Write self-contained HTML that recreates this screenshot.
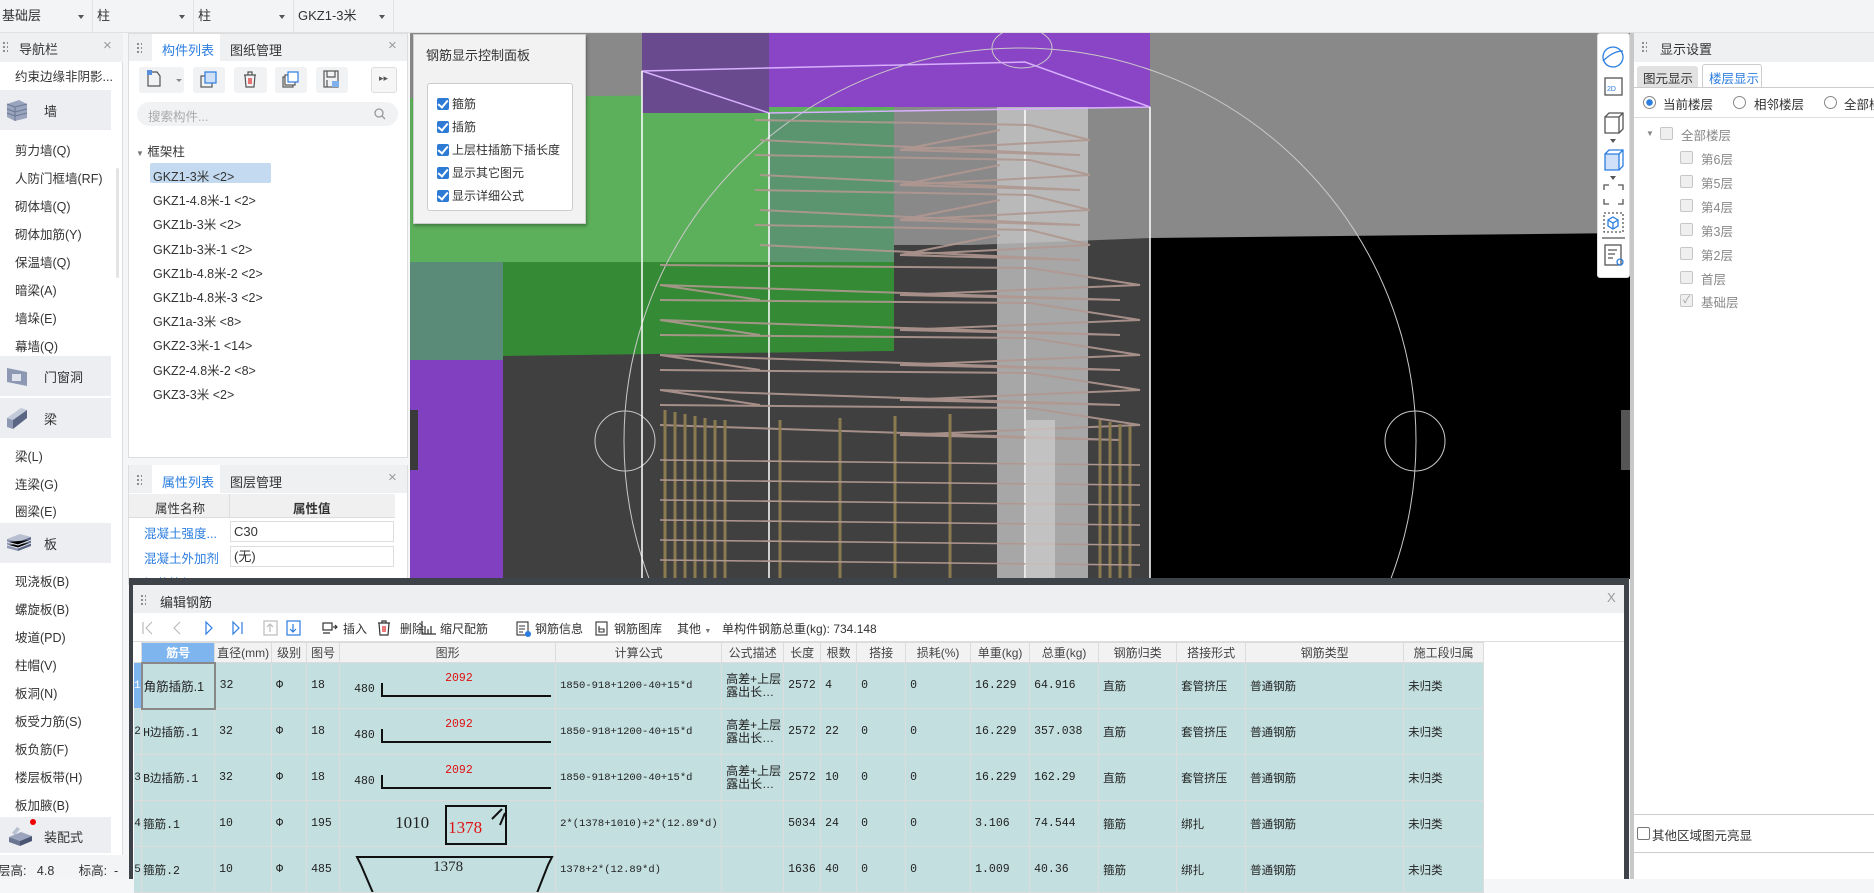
<!DOCTYPE html>
<html><head><meta charset="utf-8">
<style>
*{box-sizing:border-box;margin:0;padding:0}
body{width:1874px;height:879px;overflow:hidden;position:relative;background:#f5f6f8;font-family:"Liberation Sans","Noto Sans CJK SC",sans-serif;font-size:13px;color:#333}
.a{position:absolute}
.dd{position:absolute;top:0;height:32px;line-height:32px;padding-left:4px;border-right:1px solid #e2e2e2;background:#f3f4f6;font-size:13px}
.dd:after{content:"";position:absolute;right:8px;top:15px;border:3px solid transparent;border-top:4px solid #555}
.hdr{position:absolute;background:#eff0f2;height:27px}
.grip{position:absolute;width:6px;height:12px;background-image:radial-gradient(circle,#8a8a8a 1px,transparent 1.3px);background-size:4px 4px}
.x{position:absolute;color:#9a9a9a;font-size:15px}
.grp{position:absolute;left:0;width:111px;height:40px;background:#eceef2}
.grp span{position:absolute;left:44px;top:11px;font-size:13px}
.li{position:absolute;left:153px;font-size:12.5px;color:#333}
.tb{position:absolute;top:67px;height:26px;background:#f1f2f4;border-radius:3px}
table{border-collapse:collapse;table-layout:fixed;position:absolute;left:134px;top:642px}
td{border:1px solid #dcdcdc;height:46px;font-family:"Liberation Mono","Noto Sans CJK SC",monospace;font-size:11.5px;color:#222;background:#c3dfe0;padding-left:4px;white-space:nowrap;overflow:hidden;vertical-align:middle}
tr.h td{height:20px;background:#f2f2f2;text-align:center;padding:0;font-family:"Liberation Sans","Noto Sans CJK SC",sans-serif;font-size:12px;color:#444}
td.n{padding:0;font-size:11px;background:#c3dfe0;text-align:center;border-left:none}
.red{color:#e01010}
.cb{display:inline-block;width:12px;height:12px;background:#2e7bd6;border-radius:2px;vertical-align:-2px;margin-right:3px;position:relative}
.cb:after{content:"";position:absolute;left:3px;top:0px;width:4px;height:8px;border:solid #fff;border-width:0 2px 2px 0;transform:rotate(40deg)}
.ec{position:absolute;width:13px;height:13px;border:1px solid #c6c6c6;background:#efefef;border-radius:2px}
.fl{position:absolute;left:1701px;color:#888;font-size:12.5px}
</style></head><body>

<div class="a" style="left:0;top:0;width:1874px;height:33px;background:#f3f4f6;border-bottom:1px solid #e0e0e0"></div>
<div class="dd" style="left:-2px;width:95px">基础层</div>
<div class="dd" style="left:93px;width:101px">柱</div>
<div class="dd" style="left:194px;width:100px">柱</div>
<div class="dd" style="left:294px;width:100px">GKZ1-3米</div>

<div class="a" style="left:0;top:33px;width:123px;height:822px;background:#fff;border-right:1px solid #ddd"></div>
<div class="hdr" style="left:0;top:33px;width:123px;height:29px"></div>
<div class="grip" style="left:2px;top:41px"></div>
<div class="a" style="left:19px;top:39px;font-size:13px">导航栏</div>
<div class="x" style="left:103px;top:37px">×</div>
<div class="a" style="left:15px;top:66px;font-size:12.5px">约束边缘非阴影...</div>
<div class="a" style="left:116px;top:168px;width:3px;height:110px;background:#e4e4e4;border-radius:2px"></div>
<div class="grp" style="top:90px"><svg class="a" style="left:5px;top:8px" width="24" height="24"><path d="M2 6 L14 2 L22 6 L22 20 L10 23 L2 19Z" fill="#9aa5bd"/><path d="M2 6 L10 9 L22 6 M10 9 L10 23 M2 11 L10 14 L22 11 M2 15 L10 18 L22 15" stroke="#6b7792" fill="none"/></svg><span>墙</span></div>
<div class="a" style="left:15px;top:137px;font-size:12.5px;line-height:28px">剪力墙(Q)<br>人防门框墙(RF)<br>砌体墙(Q)<br>砌体加筋(Y)<br>保温墙(Q)<br>暗梁(A)<br>墙垛(E)<br>幕墙(Q)</div>
<div class="grp" style="top:356px"><svg class="a" style="left:5px;top:8px" width="24" height="24"><path d="M2 4 L22 8 L22 22 L2 18Z" fill="#8d98b3"/><rect x="7" y="10" width="9" height="7" fill="#dfe3ec"/></svg><span>门窗洞</span></div>
<div class="grp" style="top:398px"><svg class="a" style="left:5px;top:8px" width="24" height="24"><path d="M2 12 L16 2 L22 4 L8 14Z" fill="#c2c9d8"/><path d="M2 12 L8 14 L8 23 L2 21Z" fill="#8d98b3"/><path d="M8 14 L22 4 L22 12 L8 23Z" fill="#5a6684"/></svg><span>梁</span></div>
<div class="a" style="left:15px;top:444px;font-size:12.5px;line-height:27.5px">梁(L)<br>连梁(G)<br>圈梁(E)</div>
<div class="grp" style="top:523px"><svg class="a" style="left:6px;top:8px" width="26" height="24"><path d="M1 8 L14 3 L25 6 L12 11Z" fill="#b7bfd0"/><path d="M1 8 L12 11 L12 20 L1 17Z" fill="#8d98b3"/><path d="M12 11 L25 6 L25 15 L12 20Z" fill="#5a6684"/><path d="M1 11 L12 14 L25 9 M1 14 L12 17 L25 12" stroke="#dfe3ec"/></svg><span>板</span></div>
<div class="a" style="left:15px;top:568px;font-size:12.5px;line-height:28px">现浇板(B)<br>螺旋板(B)<br>坡道(PD)<br>柱帽(V)<br>板洞(N)<br>板受力筋(S)<br>板负筋(F)<br>楼层板带(H)<br>板加腋(B)</div>
<div class="grp" style="top:817px;height:36px"><svg class="a" style="left:7px;top:6px" width="26" height="26"><path d="M2 14 L14 9 L25 13 L13 18Z" fill="#9aa5bd"/><path d="M2 14 L13 18 L13 23 L2 19Z" fill="#6b7792"/><path d="M13 18 L25 13 L25 18 L13 23Z" fill="#4a5573"/><path d="M5 10 L10 4 L13 6 L8 12Z" fill="#b7bfd0"/></svg><div class="a" style="left:30px;top:2px;width:6px;height:6px;border-radius:50%;background:#e00"></div><span style="top:10px">装配式</span></div>
<div class="a" style="left:0;top:855px;width:128px;height:24px;background:#f3f4f6"></div>
<div class="a" style="left:-2px;top:860px;font-size:12.5px">层高:&nbsp;&nbsp;&nbsp;4.8&nbsp;&nbsp;&nbsp;&nbsp;&nbsp;&nbsp;&nbsp;标高:&nbsp;&nbsp;-</div>

<div class="a" style="left:128px;top:33px;width:280px;height:425px;background:#fff;border:1px solid #ddd"></div>
<div class="hdr" style="left:129px;top:34px;width:278px;height:27px"></div>
<div class="a" style="left:152px;top:34px;width:68px;height:27px;background:#fff"></div>
<div class="grip" style="left:136px;top:42px"></div>
<div class="a" style="left:162px;top:40px;color:#2b7de0;font-size:13px">构件列表</div>
<div class="a" style="left:230px;top:40px;font-size:13px">图纸管理</div>
<div class="x" style="left:388px;top:37px">×</div>
<div class="tb" style="left:139px;width:45px"></div>
<svg class="a" style="left:147px;top:70px" width="14" height="18"><path d="M1 4 L1 16 L13 16 L13 6 L10 2 L5 2" stroke="#555" fill="none" stroke-width="1.2"/><rect x="0" y="0" width="5" height="5" fill="#5a8fe0"/></svg>
<div class="a" style="left:176px;top:79px;border:3px solid transparent;border-top:3px solid #888"></div>
<div class="tb" style="left:193px;width:32px"></div>
<svg class="a" style="left:200px;top:71px" width="18" height="18"><rect x="1" y="5" width="11" height="11" fill="none" stroke="#555" stroke-width="1.2"/><rect x="5" y="1" width="11" height="11" fill="#cfe0f8" stroke="#2b7de0" stroke-width="1.2"/></svg>
<div class="tb" style="left:234px;width:33px"></div>
<svg class="a" style="left:242px;top:70px" width="16" height="19"><path d="M2 5 L14 5 M6 5 L6 2 L10 2 L10 5 M3 5 L4 17 L12 17 L13 5" stroke="#555" fill="none" stroke-width="1.2"/><path d="M7 8 L7 14 M9 8 L9 14" stroke="#e02020" stroke-width="1.2"/></svg>
<div class="tb" style="left:275px;width:32px"></div>
<svg class="a" style="left:282px;top:71px" width="18" height="18"><rect x="1" y="6" width="10" height="10" fill="none" stroke="#555" stroke-width="1.2"/><rect x="3" y="4" width="10" height="10" fill="#fff" stroke="#555" stroke-width="1.2"/><rect x="6" y="1" width="10" height="10" fill="#fff" stroke="#2b7de0" stroke-width="1.2"/></svg>
<div class="tb" style="left:316px;width:32px"></div>
<svg class="a" style="left:323px;top:70px" width="18" height="19"><rect x="1" y="1" width="14" height="16" fill="none" stroke="#555" stroke-width="1.2"/><path d="M4 1 L4 7 L12 7 L12 1 M4 17 L4 10" stroke="#555" fill="none" stroke-width="1.2"/><rect x="9" y="11" width="7" height="6" fill="#7fb0ec"/></svg>
<div class="tb" style="left:371px;width:26px;background:#f6f6f6;border:1px solid #ddd"></div>
<div class="a" style="left:379px;top:73px;font-size:9px;color:#555">▸▸</div>
<div class="a" style="left:137px;top:102px;width:261px;height:24px;background:#f1f2f4;border-radius:12px"></div>
<div class="a" style="left:148px;top:106px;color:#aaa;font-size:12.5px">搜索构件...</div>
<svg class="a" style="left:374px;top:108px" width="12" height="12"><circle cx="5" cy="5" r="4" stroke="#999" fill="none" stroke-width="1.3"/><path d="M8 8 L11 11" stroke="#999" stroke-width="1.3"/></svg>
<div class="a" style="left:136px;top:141px;font-size:12.5px"><span style="font-size:8px;color:#777">▼</span> 框架柱</div>
<div class="a" style="left:150px;top:163px;width:121px;height:20px;background:#c4daf0;border-radius:2px"></div>
<div class="li" style="top:165px;line-height:24.2px">GKZ1-3米 &lt;2&gt;<br>GKZ1-4.8米-1 &lt;2&gt;<br>GKZ1b-3米 &lt;2&gt;<br>GKZ1b-3米-1 &lt;2&gt;<br>GKZ1b-4.8米-2 &lt;2&gt;<br>GKZ1b-4.8米-3 &lt;2&gt;<br>GKZ1a-3米 &lt;8&gt;<br>GKZ2-3米-1 &lt;14&gt;<br>GKZ2-4.8米-2 &lt;8&gt;<br>GKZ3-3米 &lt;2&gt;</div>

<div class="a" style="left:128px;top:465px;width:280px;height:120px;background:#fff;border:1px solid #ddd"></div>
<div class="hdr" style="left:129px;top:465px;width:278px;height:28px"></div>
<div class="a" style="left:152px;top:465px;width:68px;height:28px;background:#fff"></div>
<div class="grip" style="left:136px;top:474px"></div>
<div class="a" style="left:162px;top:472px;color:#2b7de0">属性列表</div>
<div class="a" style="left:230px;top:472px">图层管理</div>
<div class="x" style="left:388px;top:469px">×</div>
<div class="a" style="left:129px;top:494px;width:266px;height:24px;background:#f0f0f0;border-bottom:1px solid #ddd"></div>
<div class="a" style="left:229px;top:494px;width:1px;height:24px;background:#ddd"></div>
<div class="a" style="left:155px;top:498px;font-size:12.5px">属性名称</div>
<div class="a" style="left:293px;top:498px;font-size:12.5px;font-weight:bold">属性值</div>
<div class="a" style="left:144px;top:522px;color:#2b7de0;font-size:12.5px;line-height:25px">混凝土强度...<br>混凝土外加剂<br>坍落等级</div>
<div class="a" style="left:230px;top:521px;width:164px;height:21px;border:1px solid #ddd;background:#fff;padding-left:3px;line-height:19px">C30</div>
<div class="a" style="left:230px;top:546px;width:164px;height:21px;border:1px solid #ddd;background:#fff;padding-left:3px;line-height:19px">(无)</div>

<svg class="a" style="left:410px;top:33px" width="1220" height="546" viewBox="410 33 1220 546">
<rect x="410" y="33" width="1220" height="546" fill="#404040"/>
<rect x="410" y="33" width="1220" height="212" fill="#898989"/>
<path d="M1150 238 L1630 233 L1630 579 L1150 579Z" fill="#000"/>
<path d="M894 248 L1150 238 L1150 579 L894 579Z" fill="#404040"/>
<path d="M410 98 L894 93 L894 262 L410 266Z" fill="#5caf5b"/>
<rect x="410" y="262" width="93" height="98" fill="#5a8a78"/>
<path d="M503 262 L894 262 L894 351 L503 356Z" fill="#358a35"/>
<rect x="410" y="360" width="93" height="219" fill="#8040c0"/>
<rect x="642" y="33" width="508" height="74" fill="#8a44c6"/>
<rect x="642" y="33" width="127" height="80" fill="#6a4a8e"/>
<path d="M768 113 L894 111 L894 262 L768 262Z" fill="#5a8a78" opacity=".7"/>
<rect x="997" y="107" width="91" height="472" fill="#c9c9c9" opacity=".75"/>
<g stroke="#c9c9c9" fill="none" stroke-width="1">
<ellipse cx="1020" cy="441" rx="396" ry="393"/>
<ellipse cx="625" cy="441" rx="30" ry="30"/>
<ellipse cx="1415" cy="441" rx="30" ry="30"/>
<ellipse cx="1022" cy="48" rx="30" ry="20"/>
</g>
<g stroke="#fff" fill="none" stroke-width="1.5">
<path d="M642 71 L1025 62 L1150 107 L769 113 Z" stroke="#d8b0ff"/>
<path d="M642 71 L642 579 M769 113 L769 579 M1150 107 L1150 579 M1025 110 L1025 579"/>
</g>
<g stroke="#b09890" fill="none" stroke-width="2" opacity=".9">
<path d="M755 120 L1030 125 L1090 140 L900 150 L1080 155 L760 140 M900 150 L1000 130"/>
<path d="M755 155 L1030 160 L1090 175 L900 185 L1080 190 L760 175 M900 185 L1000 165"/>
<path d="M755 190 L1030 195 L1090 210 L900 220 L1080 225 L760 210 M900 220 L1000 200"/>
<path d="M755 225 L1030 230 L1090 245 L900 255 L1080 260 L760 245 M900 255 L1000 235"/>
<path d="M660 265 L1030 268 L1140 285 L900 295 L1120 300 L660 285 L760 300"/>
<path d="M660 300 L1030 303 L1140 320 L900 330 L1120 335 L660 320 L760 335"/>
<path d="M660 335 L1030 338 L1140 355 L900 365 L1120 370 L660 355 L760 370"/>
<path d="M660 370 L1030 373 L1140 390 L900 400 L1120 405 L660 390 L760 405"/>
<path d="M660 405 L1030 408 L1140 425 L900 435 L1120 440 L660 425"/>
</g>
<g stroke="#8a7a50" stroke-width="3">
<path d="M665 410 L665 579 M675 412 L675 579 M685 414 L685 579 M695 416 L695 579 M705 418 L705 579 M715 420 L715 579 M725 420 L725 579 M780 420 L780 579 M840 418 L840 579 M895 416 L895 579 M950 414 L950 579 M1100 420 L1100 579 M1110 422 L1110 579 M1120 424 L1120 579 M1130 426 L1130 579"/>
</g>
<g stroke="#b09890" stroke-width="1.5" fill="none">
<path d="M660 460 L1140 465 M660 500 L1140 505 M660 540 L1140 545 M660 480 L1140 485 M660 520 L1140 525 M660 560 L1140 565"/>
</g>
<rect x="1025" y="420" width="30" height="159" fill="#ddd" opacity=".5"/>
<rect x="410" y="410" width="8" height="60" fill="#3a3a3a"/>
<rect x="1621" y="410" width="9" height="60" fill="#555"/>
</svg>
<div class="a" style="left:413px;top:34px;width:173px;height:190px;background:#f2f2f2;border:1px solid #ccc;box-shadow:1px 2px 3px rgba(0,0,0,.3)"></div>
<div class="a" style="left:426px;top:45px;font-size:13px;color:#333">钢筋显示控制面板</div>
<div class="a" style="left:427px;top:83px;width:146px;height:128px;background:#fff;border:1px solid #ccc;border-radius:3px"></div>
<div class="a" style="left:437px;top:93px;font-size:12px;line-height:23px">
<div><span class="cb"></span>箍筋</div><div><span class="cb"></span>插筋</div><div><span class="cb"></span>上层柱插筋下插长度</div><div><span class="cb"></span>显示其它图元</div><div><span class="cb"></span>显示详细公式</div></div>
<div class="a" style="left:1597px;top:33px;width:33px;height:245px;background:#fff;border:1px solid #ddd;border-radius:3px"></div>
<svg class="a" style="left:1597px;top:33px" width="33" height="245">
<g fill="none" stroke-width="1.3">
<ellipse cx="16" cy="24" rx="10" ry="10" stroke="#2b7de0" transform="rotate(-30 16 24)"/>
<path d="M6 28 Q16 18 26 18" stroke="#2b7de0"/>
<rect x="8" y="45" width="17" height="17" stroke="#555"/>
<path d="M8 84 L8 100 L22 100 L22 84 Z M8 84 L12 80 L26 80 L26 96 L22 100 M22 84 L26 80" stroke="#555"/>
<path d="M13 106 L19 106 L16 110Z" fill="#555" stroke="none"/>
<path d="M8 121 L8 137 L22 137 L22 121 Z" fill="#cfe0f8" stroke="#2b7de0"/>
<path d="M8 121 L12 117 L26 117 L26 133 L22 137 M22 121 L26 117" stroke="#2b7de0"/>
<path d="M13 143 L19 143 L16 147Z" fill="#555" stroke="none"/>
<path d="M7 157 L7 152 L12 152 M21 152 L26 152 L26 157 M26 166 L26 171 L21 171 M12 171 L7 171 L7 166" stroke="#555"/>
<rect x="7" y="180" width="19" height="19" stroke="#555" stroke-dasharray="2 2"/>
<path d="M16 184 L21 187 L21 193 L16 196 L11 193 L11 187Z M11 187 L16 190 L21 187 M16 190 L16 196" stroke="#2b7de0"/>
<path d="M5 205 L28 205" stroke="#555"/>
<rect x="8" y="212" width="16" height="20" stroke="#555"/>
<path d="M11 217 L20 217 M11 221 L18 221 M11 225 L16 225" stroke="#555"/>
<circle cx="23" cy="229" r="3" stroke="#2b7de0"/>
</g>
<text x="10" y="58" font-size="7" fill="#2b7de0" font-family="Liberation Sans">2D</text>
</svg>

<div class="a" style="left:1630px;top:33px;width:4px;height:846px;background:#c8c8c8"></div>
<div class="a" style="left:1634px;top:33px;width:240px;height:846px;background:#fff"></div>
<div class="hdr" style="left:1634px;top:33px;width:240px;height:29px"></div>
<div class="grip" style="left:1641px;top:41px"></div>
<div class="a" style="left:1660px;top:39px">显示设置</div>
<div class="a" style="left:1637px;top:66px;width:61px;height:21px;background:#e2e2e2;border-radius:3px 3px 0 0"></div>
<div class="a" style="left:1643px;top:68px;font-size:12.5px">图元显示</div>
<div class="a" style="left:1702px;top:64px;width:60px;height:24px;background:#fff;border:1px solid #ccc;border-bottom:none;border-radius:3px 3px 0 0"></div>
<div class="a" style="left:1709px;top:68px;font-size:12.5px;color:#2b7de0">楼层显示</div>
<div class="a" style="left:1634px;top:87px;width:240px;height:1px;background:#ccc"></div>
<div class="a" style="left:1643px;top:96px;width:13px;height:13px;border:1px solid #888;border-radius:50%;background:radial-gradient(circle,#2b7de0 3px,#fff 3.5px)"></div>
<div class="a" style="left:1663px;top:94px;font-size:12.5px">当前楼层</div>
<div class="a" style="left:1733px;top:96px;width:13px;height:13px;border:1px solid #888;border-radius:50%"></div>
<div class="a" style="left:1754px;top:94px;font-size:12.5px">相邻楼层</div>
<div class="a" style="left:1824px;top:96px;width:13px;height:13px;border:1px solid #888;border-radius:50%"></div>
<div class="a" style="left:1844px;top:94px;font-size:12.5px;white-space:nowrap">全部楼层</div>
<div class="a" style="left:1634px;top:117px;width:240px;height:1px;background:#ddd"></div>
<div class="a" style="left:1646px;top:129px;font-size:8px;color:#888">▼</div>
<div class="ec" style="left:1660px;top:127px"></div>
<div class="fl" style="left:1681px;top:125px">全部楼层</div>
<div class="ec" style="left:1680px;top:151px"></div><div class="fl" style="top:149px">第6层</div>
<div class="ec" style="left:1680px;top:175px"></div><div class="fl" style="top:173px">第5层</div>
<div class="ec" style="left:1680px;top:199px"></div><div class="fl" style="top:197px">第4层</div>
<div class="ec" style="left:1680px;top:223px"></div><div class="fl" style="top:221px">第3层</div>
<div class="ec" style="left:1680px;top:247px"></div><div class="fl" style="top:245px">第2层</div>
<div class="ec" style="left:1680px;top:271px"></div><div class="fl" style="top:269px">首层</div>
<div class="ec" style="left:1680px;top:294px;color:#999;font-size:10px;line-height:11px;text-align:center">✓</div><div class="fl" style="top:292px">基础层</div>
<div class="a" style="left:1634px;top:814px;width:240px;height:1px;background:#ccc"></div>
<div class="a" style="left:1637px;top:827px;width:13px;height:13px;border:1px solid #777;border-radius:2px"></div>
<div class="a" style="left:1652px;top:825px;font-size:12.5px">其他区域图元亮显</div>
<div class="a" style="left:1634px;top:852px;width:240px;height:1px;background:#ccc"></div>

<div class="a" style="left:129px;top:578px;width:1500px;height:301px;background:#3e434a"></div>
<div class="a" style="left:133px;top:585px;width:1491px;height:294px;background:#fff"></div>
<div class="a" style="left:133px;top:585px;width:1491px;height:28px;background:#eeeff1"></div>
<div class="grip" style="left:140px;top:594px"></div>
<div class="a" style="left:160px;top:592px;font-size:13px">编辑钢筋</div>
<div class="x" style="left:1607px;top:590px;font-size:13px">X</div>
<div class="a" style="left:133px;top:641px;width:1491px;height:1px;background:#ddd"></div>
<svg class="a" style="left:140px;top:618px" width="310" height="20">
<g fill="none" stroke-width="1.2">
<path d="M3 4 L3 16 M12 4 L6 10 L12 16" stroke="#bbb"/>
<path d="M40 4 L34 10 L40 16" stroke="#bbb"/>
<path d="M66 4 L72 10 L66 16Z" stroke="#2b7de0"/>
<path d="M93 4 L99 10 L93 16Z M102 4 L102 16" stroke="#2b7de0"/>
<rect x="124" y="3" width="13" height="14" stroke="#bbb"/><path d="M130 14 L130 6 M127 9 L130 6 L133 9" stroke="#bbb"/>
<rect x="147" y="3" width="13" height="14" stroke="#2b7de0"/><path d="M153 6 L153 14 M150 11 L153 14 L156 11" stroke="#2b7de0"/>
<rect x="183" y="5" width="9" height="7" stroke="#333"/><path d="M183 15 L190 15 M193 9 L197 9 M195 7 L197 9 L195 11" stroke="#333"/>
<path d="M238 5 L250 5 M242 5 L242 3 L246 3 L246 5 M239 5 L240 17 L248 17 L249 5" stroke="#333"/><path d="M243 8 L243 14 M245 8 L245 14" stroke="#e02020"/>
<path d="M282 3 L282 16 L296 16 M285 8 L285 16 M288 11 L288 16 M291 8 L291 16" stroke="#333"/>
</g></svg>
<div class="a" style="left:343px;top:620px;font-size:12px;white-space:nowrap">插入</div>
<div class="a" style="left:400px;top:620px;font-size:12px">删除</div>
<div class="a" style="left:440px;top:620px;font-size:12px;white-space:nowrap">缩尺配筋</div>
<svg class="a" style="left:515px;top:620px" width="100" height="18"><g fill="none" stroke="#333" stroke-width="1.1"><rect x="2" y="2" width="11" height="13"/><path d="M4 6 L10 6 M4 9 L10 9 M4 12 L8 12"/><rect x="81" y="2" width="11" height="13"/><path d="M84 6 L84 12 L89 12 L89 9 L84 9"/></g><circle cx="13" cy="14" r="3" fill="#2b7de0"/></svg>
<div class="a" style="left:535px;top:620px;font-size:12px">钢筋信息</div>
<div class="a" style="left:614px;top:620px;font-size:12px">钢筋图库</div>
<div class="a" style="left:677px;top:620px;font-size:12px">其他 <span style="font-size:7px;color:#777">▼</span></div>
<div class="a" style="left:722px;top:620px;font-size:12px;white-space:nowrap">单构件钢筋总重(kg): 734.148</div>

<table>
<colgroup><col style="width:7px"><col style="width:73px"><col style="width:57px"><col style="width:35px"><col style="width:33px"><col style="width:216px"><col style="width:166px"><col style="width:62px"><col style="width:37px"><col style="width:36px"><col style="width:49px"><col style="width:65px"><col style="width:59px"><col style="width:69px"><col style="width:78px"><col style="width:69px"><col style="width:158px"><col style="width:80px"></colgroup>
<tr class="h"><td style="background:#fff;border:none"></td><td style="background:#7fb5ee;color:#fff;font-weight:bold">筋号</td><td>直径(mm)</td><td>级别</td><td>图号</td><td>图形</td><td>计算公式</td><td>公式描述</td><td>长度</td><td>根数</td><td>搭接</td><td>损耗(%)</td><td>单重(kg)</td><td>总重(kg)</td><td>钢筋归类</td><td>搭接形式</td><td>钢筋类型</td><td>施工段归属</td></tr>
<tr><td class="n" style="background:#7fb5ee;color:#fff">1</td><td style="border:2px solid #888;font-family:'Liberation Sans','Noto Sans CJK SC',sans-serif;font-size:12.5px;padding-left:1px">角筋插筋.1</td><td>32</td><td>Φ</td><td>18</td><td style="position:relative"><span style="position:absolute;left:14px;top:20px">480</span><div style="position:absolute;left:41px;top:20px;width:170px;height:14px;border-left:2px solid #111;border-bottom:2px solid #111"></div><span class="red" style="position:absolute;left:105px;top:9px">2092</span></td><td style="font-size:10.5px">1850-918+1200-40+15*d</td><td style="white-space:normal;line-height:13px;font-family:'Liberation Sans','Noto Sans CJK SC';font-size:12px">高差+上层露出长…</td><td>2572</td><td>4</td><td>0</td><td>0</td><td>16.229</td><td>64.916</td><td>直筋</td><td>套管挤压</td><td>普通钢筋</td><td>未归类</td></tr>
<tr><td class="n">2</td><td style="padding-left:1px">H边插筋.1</td><td>32</td><td>Φ</td><td>18</td><td style="position:relative"><span style="position:absolute;left:14px;top:20px">480</span><div style="position:absolute;left:41px;top:20px;width:170px;height:14px;border-left:2px solid #111;border-bottom:2px solid #111"></div><span class="red" style="position:absolute;left:105px;top:9px">2092</span></td><td style="font-size:10.5px">1850-918+1200-40+15*d</td><td style="white-space:normal;line-height:13px;font-family:'Liberation Sans','Noto Sans CJK SC';font-size:12px">高差+上层露出长…</td><td>2572</td><td>22</td><td>0</td><td>0</td><td>16.229</td><td>357.038</td><td>直筋</td><td>套管挤压</td><td>普通钢筋</td><td>未归类</td></tr>
<tr><td class="n">3</td><td style="padding-left:1px">B边插筋.1</td><td>32</td><td>Φ</td><td>18</td><td style="position:relative"><span style="position:absolute;left:14px;top:20px">480</span><div style="position:absolute;left:41px;top:20px;width:170px;height:14px;border-left:2px solid #111;border-bottom:2px solid #111"></div><span class="red" style="position:absolute;left:105px;top:9px">2092</span></td><td style="font-size:10.5px">1850-918+1200-40+15*d</td><td style="white-space:normal;line-height:13px;font-family:'Liberation Sans','Noto Sans CJK SC';font-size:12px">高差+上层露出长…</td><td>2572</td><td>10</td><td>0</td><td>0</td><td>16.229</td><td>162.29</td><td>直筋</td><td>套管挤压</td><td>普通钢筋</td><td>未归类</td></tr>
<tr><td class="n">4</td><td style="padding-left:1px">箍筋.1</td><td>10</td><td>Φ</td><td>195</td><td style="position:relative"><span style="position:absolute;left:55px;top:12px;font-family:'Liberation Serif';font-size:17px">1010</span><div style="position:absolute;left:105px;top:4px;width:62px;height:40px;border:2px solid #111"></div><span class="red" style="position:absolute;left:108px;top:17px;font-family:'Liberation Serif';font-size:17px">1378</span><svg style="position:absolute;left:150px;top:6px" width="16" height="20"><path d="M2 12 L12 2 M10 18 L15 6" stroke="#111" stroke-width="2"/></svg></td><td style="font-size:10.5px">2*(1378+1010)+2*(12.89*d)</td><td></td><td>5034</td><td>24</td><td>0</td><td>0</td><td>3.106</td><td>74.544</td><td>箍筋</td><td>绑扎</td><td>普通钢筋</td><td>未归类</td></tr>
<tr><td class="n">5</td><td style="padding-left:1px">箍筋.2</td><td>10</td><td>Φ</td><td>485</td><td style="position:relative"><svg style="position:absolute;left:15px;top:8px" width="200" height="40"><path d="M6 10 L2 2 L197 2 L193 10 L182 38 M6 10 L18 38" stroke="#111" stroke-width="2" fill="none"/></svg><span style="position:absolute;left:93px;top:12px;font-family:'Liberation Serif';font-size:15px">1378</span></td><td style="font-size:10.5px">1378+2*(12.89*d)</td><td></td><td>1636</td><td>40</td><td>0</td><td>0</td><td>1.009</td><td>40.36</td><td>箍筋</td><td>绑扎</td><td>普通钢筋</td><td>未归类</td></tr>
</table>
</body></html>
